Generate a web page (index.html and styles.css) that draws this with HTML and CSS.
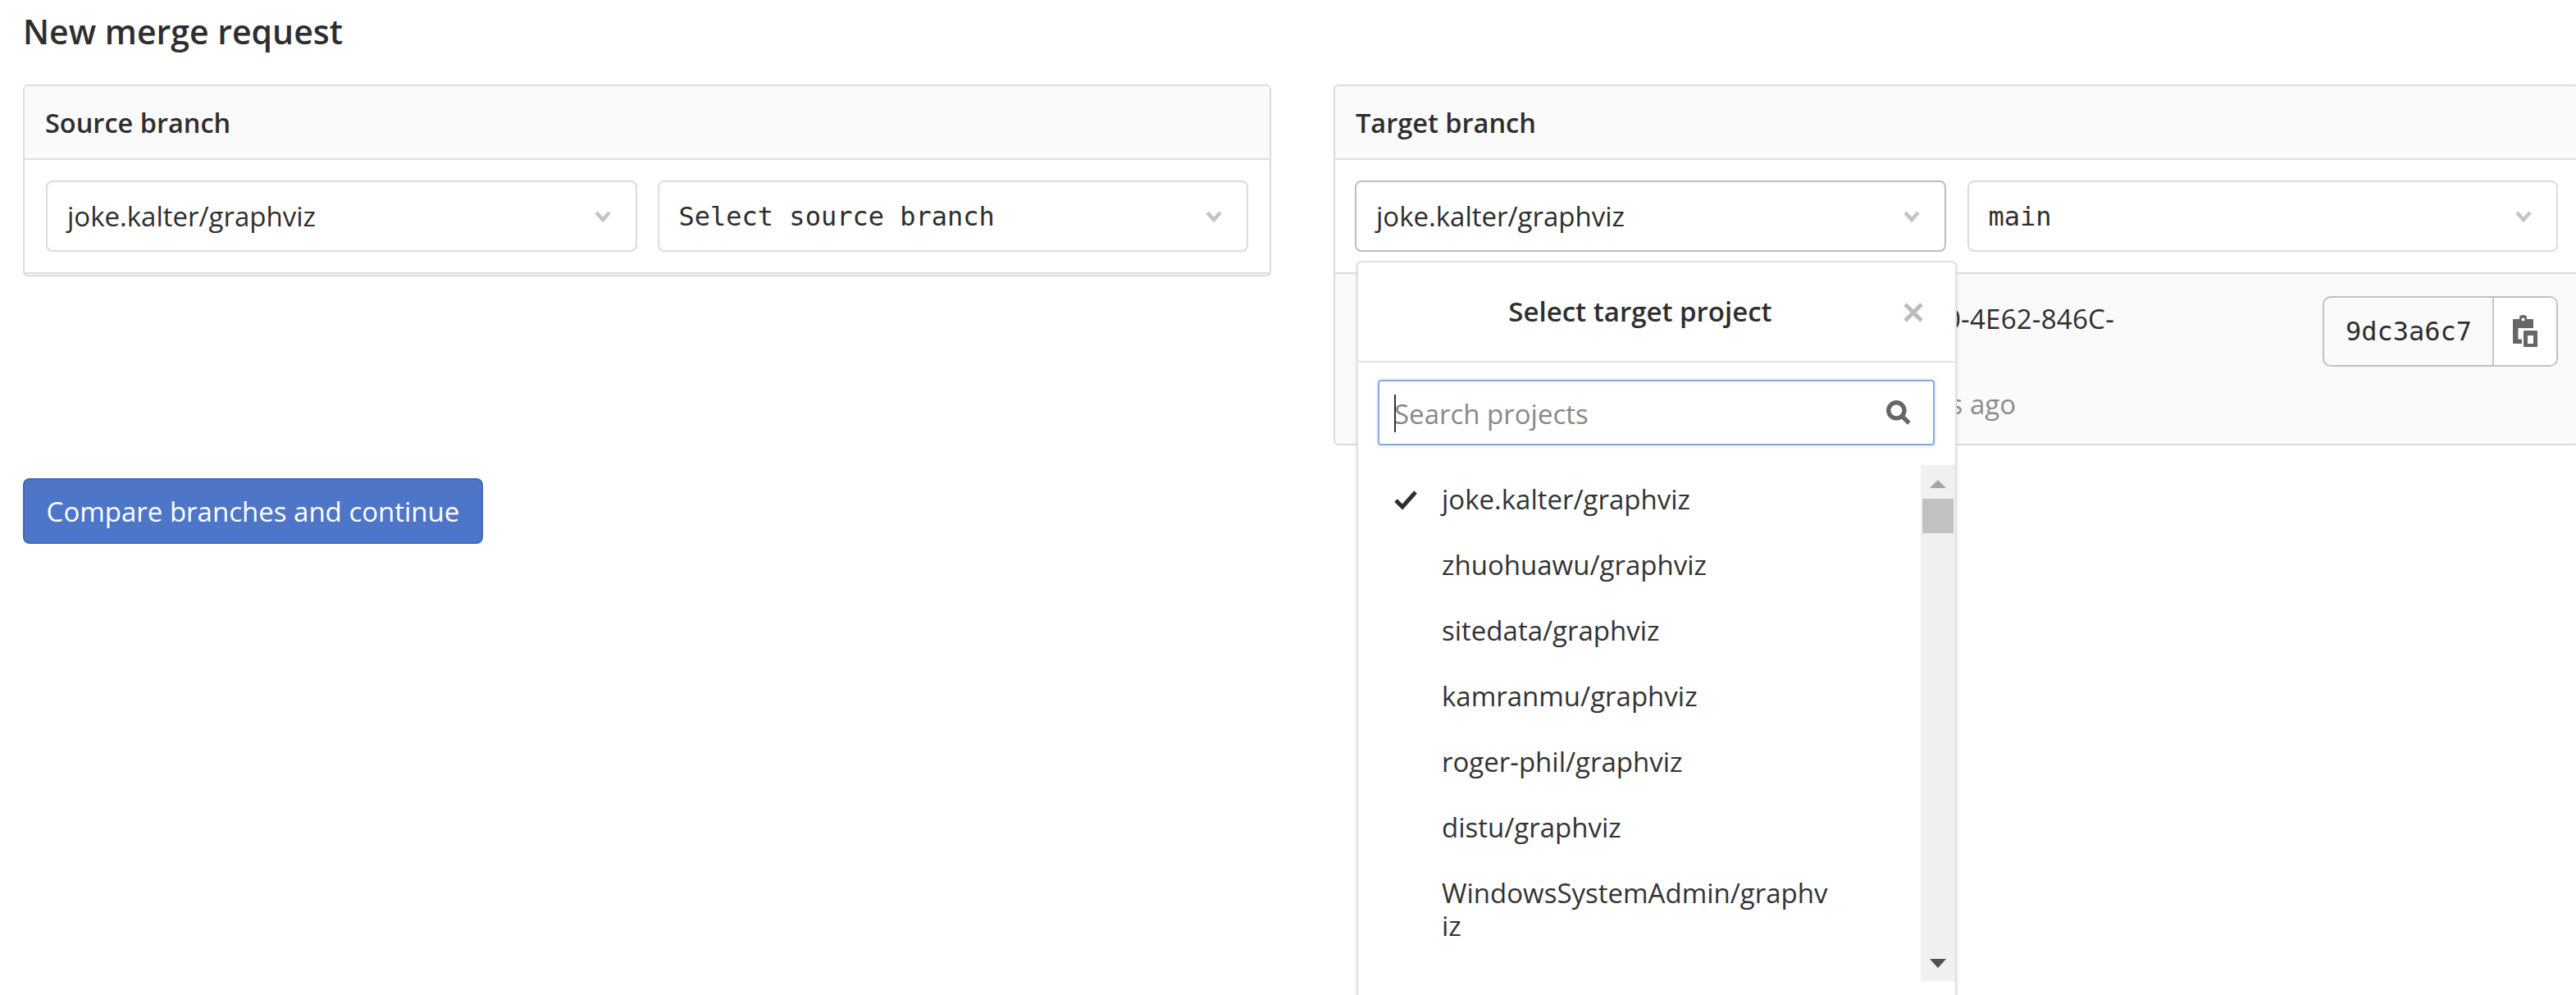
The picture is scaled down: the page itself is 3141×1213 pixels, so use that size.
FILE: index.html
```html
<!DOCTYPE html>
<html lang="en">
<head>
<meta charset="utf-8">
<title>New merge request</title>
<link rel="stylesheet" href="styles.css">
</head>
<body>
<main class="page">
  <h1 class="title">New merge request</h1>
  <div class="columns">
    <section class="card">
      <h2 class="card-head">Source branch</h2>
      <div class="card-body">
        <div class="select"><span>joke.kalter/graphviz</span><svg class="chev" viewBox="0 0 20 14"><path d="M2 2l8 9 8-9" /></svg></div>
        <div class="select"><span class="mono">Select source branch</span><svg class="chev" viewBox="0 0 20 14"><path d="M2 2l8 9 8-9" /></svg></div>
      </div>
    </section>
    <section class="card target">
      <h2 class="card-head">Target branch</h2>
      <div class="card-body">
        <div class="select dark"><span>joke.kalter/graphviz</span><svg class="chev" viewBox="0 0 20 14"><path d="M2 2l8 9 8-9" /></svg></div>
        <div class="select"><span class="mono">main</span><svg class="chev" viewBox="0 0 20 14"><path d="M2 2l8 9 8-9" /></svg></div>
      </div>
      <div class="commit">
        <div class="commit-text">
          <div class="commit-msg">Merge 3F2A9C10-4E62-846C-</div>
          <div class="commit-meta">3 hours ago</div>
        </div>
        <div class="sha"><span class="sha-text">9dc3a6c7</span><span class="sha-copy"><svg viewBox="0 0 30 40" width="30" height="40"><path class="clip" fill-rule="evenodd" d="M1 5H8V3a4.500 3 0 0 1 9 0V5h7a1 1 0 0 1 1 1V16H6.500V29.500H11V35H1a1 1 0 0 1-1-1V6a1 1 0 0 1 1-1zM12.500 3.500a2 2 0 1 0 .01 0z"/><path class="clip" fill-rule="evenodd" d="M14 19h15a1 1 0 0 1 1 1v18a1 1 0 0 1-1 1H14a1 1 0 0 1-1-1V20a1 1 0 0 1 1-1zM18 25v10h7V25z"/></svg></span></div>
      </div>
      <div class="menu">
        <div class="menu-head"><span>Select target project</span>
          <svg class="close" viewBox="0 0 26 26"><path d="M3 3l20 20M23 3L3 23"/></svg>
        </div>
        <div class="search"><div class="search-box"><i class="caret"></i><span class="search-hint">Search projects</span>
          <svg class="mag" viewBox="0 0 30 30"><circle cx="12.500" cy="12.500" r="9"/><path d="M19 19l8 8"/></svg></div></div>
        <div class="list-wrap">
          <ul class="list">
            <li><svg class="check" viewBox="0 0 28 24"><path d="M2 13l8 8L26 3"/></svg>joke.kalter/graphviz</li>
            <li>zhuohuawu/graphviz</li>
            <li>sitedata/graphviz</li>
            <li>kamranmu/graphviz</li>
            <li>roger-phil/graphviz</li>
            <li>distu/graphviz</li>
            <li>WindowsSystemAdmin/graphv<br>iz</li>
            <li>cosmok/graphviz</li>
          </ul>
          <div class="scroll"><i class="up"></i><i class="thumb"></i><i class="down"></i></div>
        </div>
      </div>
    </section>
  </div>
  <button class="cta">Compare branches and continue</button>
</main>
</body>
</html>
```
FILE: styles.css
```css
* { box-sizing: border-box; }
html, body { margin: 0; height: 100%; overflow: hidden; background: #fff; }
body { font-family: "Open Sans", "Noto Sans", sans-serif; color: #2e2e2e; }
.page { padding: 13px 0 0 28px; }
.title { margin: 0; font-size: 41px; font-weight: 600; line-height: 50px; color: #2e2e2e; }
.columns { display: flex; gap: 76px; margin-top: 40px; width: 3200px; align-items: flex-start; }
.card { width: 1522px; height: 234px; border: 2px solid #dcdcdc; border-radius: 6px; flex: none; }
.card.target { position: relative; width: 1518px; height: 440px; background: #fafafa; }
.card-head { margin: 0; height: 90px; padding: 0 25px; background: #fafafa; border-bottom: 2px solid #e0e0e0; font-size: 32.5px; font-weight: 600; line-height: 90px; border-radius: 4px 4px 0 0; }
.card-body { display: flex; gap: 25px; padding: 25px 26px 25px 26px; height: 139px; background: #fff; border-bottom: 2px solid #dcdcdc; }
.target .card-body { gap: 26px; padding: 25px 23px 25px 24px; }
.select { flex: 1; display: flex; align-items: center; justify-content: space-between; height: 87px; border: 2px solid #dcdcdc; border-radius: 8px; padding: 0 30px 0 24px; font-size: 33px; background: #fff; }
.select.dark { border-color: #bdbdbd; }
.mono { font-family: "DejaVu Sans Mono", monospace; font-size: 32px; }
.chev { width: 20px; height: 14px; fill: none; stroke: #c4c4c4; stroke-width: 4.500; }
.commit { display: flex; justify-content: space-between; align-items: flex-start; padding: 27px 23px 0 24px; height: 207px; }
.commit-text { white-space: nowrap; text-align: right; }
.commit-msg { width: 926px; font-size: 33px; font-weight: 500; letter-spacing: .25px; line-height: 44px; margin-top: 6px; }
.commit-meta { width: 806px; color: #8c8c8c; font-size: 33px; line-height: 44px; margin-top: 60px; }
.sha { display: flex; height: 86px; border: 2px solid #c0c0c0; border-radius: 10px; background: #fafafa; font-family: "DejaVu Sans Mono", monospace; font-size: 32px; flex: none; }
.sha-text { display: flex; align-items: center; padding: 0 25px 0 26px; border-right: 2px solid #c8c8c8; }
.sha-copy { display: flex; align-items: center; justify-content: center; width: 76px; background: #fff; border-radius: 0 8px 8px 0; }
.clip { fill: #666; }
.menu { position: absolute; left: 26px; top: 213px; width: 732px; height: 1100px; background: #fff; border: 2px solid #e0e0e0; border-radius: 6px; box-shadow: 0 2px 4px rgba(0,0,0,.12); }
.menu-head { position: relative; height: 122px; padding-right: 40px; border-bottom: 2px solid #e4e4e4; text-align: center; font-size: 33px; font-weight: 600; line-height: 120px; }
.close { position: absolute; right: 38px; top: 48px; width: 26px; height: 26px; fill: none; stroke: #bcbcbc; stroke-width: 5; }
.search { padding: 21px 25px 0 24px; }
.search-box { position: relative; display: flex; align-items: center; height: 80px; border: 2px solid #89a9e6; border-radius: 4px; box-shadow: 0 0 4px rgba(80,130,230,.3); padding: 0 18px; color: #888; font-size: 33px; }
.search-hint { padding-top: 2px; }
.caret { position: absolute; left: 18px; top: 16px; width: 2px; height: 46px; background: #333; }
.mag { position: absolute; right: 26px; top: 22px; width: 32px; height: 32px; fill: none; stroke: #666; stroke-width: 5; }
.list-wrap { position: relative; height: 629px; margin-top: 24px; padding-top: 2px; overflow: hidden; }
.list { list-style: none; margin: 0; padding: 0 130px 0 102px; font-size: 33px; line-height: 40px; color: #333; white-space: nowrap; }
.list li { position: relative; padding: 20px 0; }
.check { position: absolute; left: -58px; top: 28px; width: 28px; height: 24px; fill: none; stroke: #2e2e2e; stroke-width: 5; }
.scroll { position: absolute; right: 0; top: 0; width: 42px; height: 629px; background: #f0f0f0; }
.scroll i { position: absolute; display: block; }
.up { top: 18px; left: 11px; border: 10px solid transparent; border-top: 0; border-bottom: 10px solid #a4a4a4; }
.thumb { top: 41px; left: 2px; width: 38px; height: 42px; background: #c1c1c1; }
.down { bottom: 16px; left: 11px; border: 10px solid transparent; border-bottom: 0; border-top: 11px solid #505050; }
.cta { display: block; margin-top: 40px; width: 561px; height: 80px; background: #4d76c9; border: 2px solid #4169b8; border-radius: 8px; color: #fff; font: 400 33px "Open Sans", sans-serif; padding: 0; }
```
